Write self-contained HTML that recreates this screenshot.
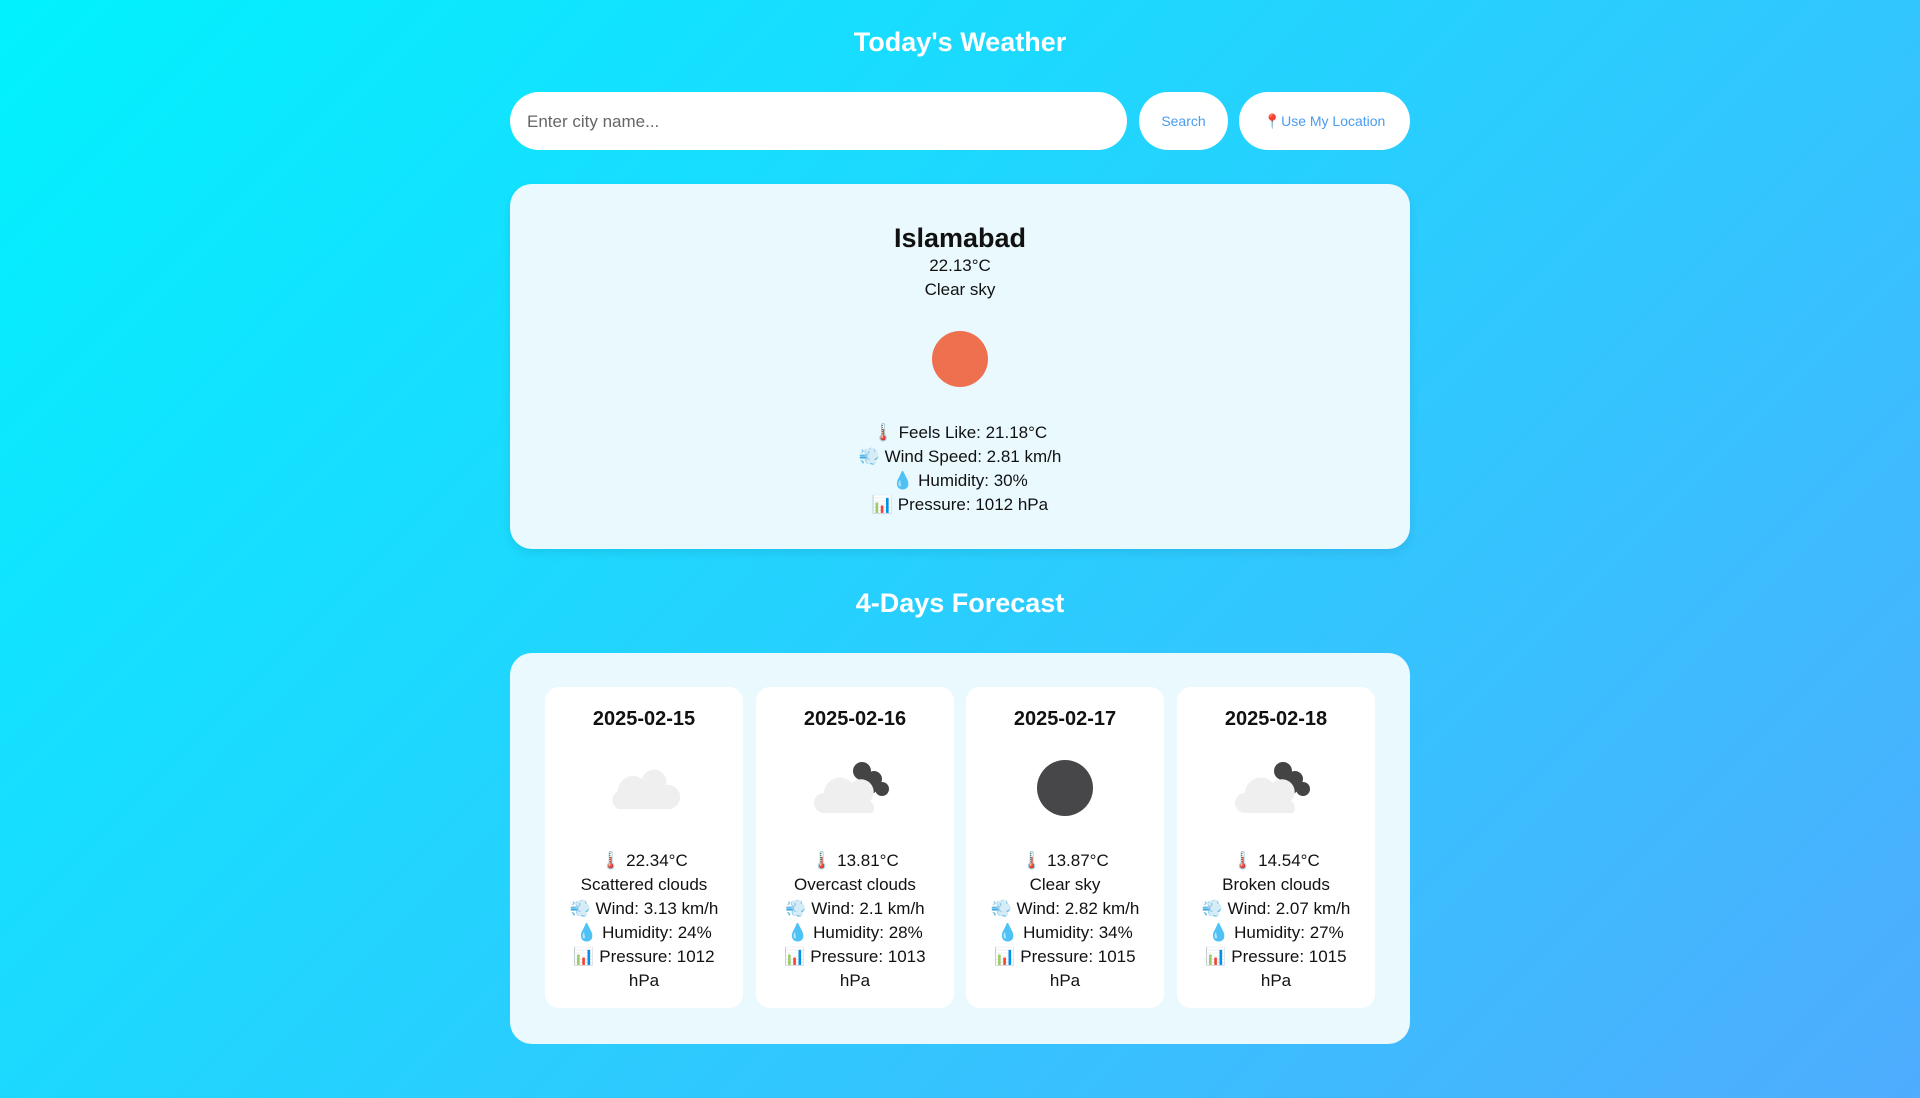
<!DOCTYPE html>
<html><head><meta charset="utf-8"><style>
*{box-sizing:border-box;margin:0;padding:0}
html,body{width:1920px;height:1098px;overflow:hidden}
body{background:linear-gradient(135deg,#00f2fe 0%,#4facfe 100%);font-family:"Liberation Sans",sans-serif;color:#111;position:relative}
.abs{position:absolute}
h1,h2{position:absolute;left:0;width:1920px;text-align:center;color:#fff;font-weight:bold;font-size:27px}
.input{left:510px;top:92px;width:617px;height:58px;background:#fff;border-radius:29px;font-size:17px;color:#666;padding:20px 0 0 17px}
.btn{top:92px;height:58px;background:#fff;border-radius:29px;font-size:14px;color:#4a9cf0;text-align:center;line-height:58px}
.card{left:510px;top:184px;width:900px;height:365px;background:#e9f9fe;border-radius:22px;box-shadow:0 4px 10px rgba(0,0,0,0.08);text-align:center}
.line{font-size:17px;line-height:24px}
.fc{left:510px;top:653px;width:900px;height:391px;background:#e9f9fe;border-radius:22px}
.day{top:34px;width:198px;height:321px;background:#fff;border-radius:14px;text-align:center}
.day h3{font-size:20px;margin-top:20px;line-height:24px}
.day .ic{height:118px;position:relative}
.day .t{font-size:17px;line-height:24px}
.sun{width:56px;height:56px;border-radius:50%;background:#ee704f;position:absolute;left:932px;top:331px}
</style></head><body>
<h1 style="top:27px">Today's Weather</h1>
<div class="abs input">Enter city name...</div>
<div class="abs btn" style="left:1139px;width:89px">Search</div>
<div class="abs btn" style="left:1239px;width:171px"><span style="color:#d33">📍</span>Use My Location</div>
<div class="abs card">
<div style="font-size:27px;font-weight:bold;margin-top:38px;line-height:32px">Islamabad</div>
<div class="line">22.13°C</div>
<div class="line">Clear sky</div>
<div style="margin-top:119px" class="line">🌡️ Feels Like: 21.18°C</div>
<div class="line">💨 Wind Speed: 2.81 km/h</div>
<div class="line">💧 Humidity: 30%</div>
<div class="line">📊 Pressure: 1012 hPa</div>
</div>
<div class="sun"></div>
<h2 style="top:588px">4-Days Forecast</h2>
<div class="abs fc">
<div class="abs day" style="left:35px"><h3>2025-02-15</h3><div class="ic">
<svg width="80" height="60" style="position:absolute;left:59px;top:30px"><path d="M14 48a10 10 0 0 1 0-18a15 15 0 0 1 24-12a12 12 0 0 1 24 6a9 9 0 0 1 4 24z" fill="#efefef"/></svg></div>
<div class="t">🌡️ 22.34°C</div><div class="t">Scattered clouds</div><div class="t">💨 Wind: 3.13 km/h</div><div class="t">💧 Humidity: 24%</div><div class="t">📊 Pressure: 1012<br>hPa</div></div>
<div class="abs day" style="left:246px"><h3>2025-02-16</h3><div class="ic">
<svg width="90" height="70" style="position:absolute;left:56px;top:24px"><circle cx="50" cy="16" r="9" fill="#444"/><circle cx="62" cy="24" r="8" fill="#444"/><circle cx="70" cy="34" r="7" fill="#444"/><circle cx="56" cy="30" r="10" fill="#444"/><path d="M12 58a10 10 0 0 1 0-20a16 16 0 0 1 28-10a12 12 0 0 1 18 18a8 8 0 0 1 2 12z" fill="#efefef"/></svg></div>
<div class="t">🌡️ 13.81°C</div><div class="t">Overcast clouds</div><div class="t">💨 Wind: 2.1 km/h</div><div class="t">💧 Humidity: 28%</div><div class="t">📊 Pressure: 1013<br>hPa</div></div>
<div class="abs day" style="left:456px"><h3>2025-02-17</h3><div class="ic">
<div style="position:absolute;left:71px;top:29px;width:56px;height:56px;border-radius:50%;background:#474749"></div></div>
<div class="t">🌡️ 13.87°C</div><div class="t">Clear sky</div><div class="t">💨 Wind: 2.82 km/h</div><div class="t">💧 Humidity: 34%</div><div class="t">📊 Pressure: 1015<br>hPa</div></div>
<div class="abs day" style="left:667px"><h3>2025-02-18</h3><div class="ic">
<svg width="90" height="70" style="position:absolute;left:56px;top:24px"><circle cx="50" cy="16" r="9" fill="#444"/><circle cx="62" cy="24" r="8" fill="#444"/><circle cx="70" cy="34" r="7" fill="#444"/><circle cx="56" cy="30" r="10" fill="#444"/><path d="M12 58a10 10 0 0 1 0-20a16 16 0 0 1 28-10a12 12 0 0 1 18 18a8 8 0 0 1 2 12z" fill="#efefef"/></svg></div>
<div class="t">🌡️ 14.54°C</div><div class="t">Broken clouds</div><div class="t">💨 Wind: 2.07 km/h</div><div class="t">💧 Humidity: 27%</div><div class="t">📊 Pressure: 1015<br>hPa</div></div>
</div>
</body></html>
